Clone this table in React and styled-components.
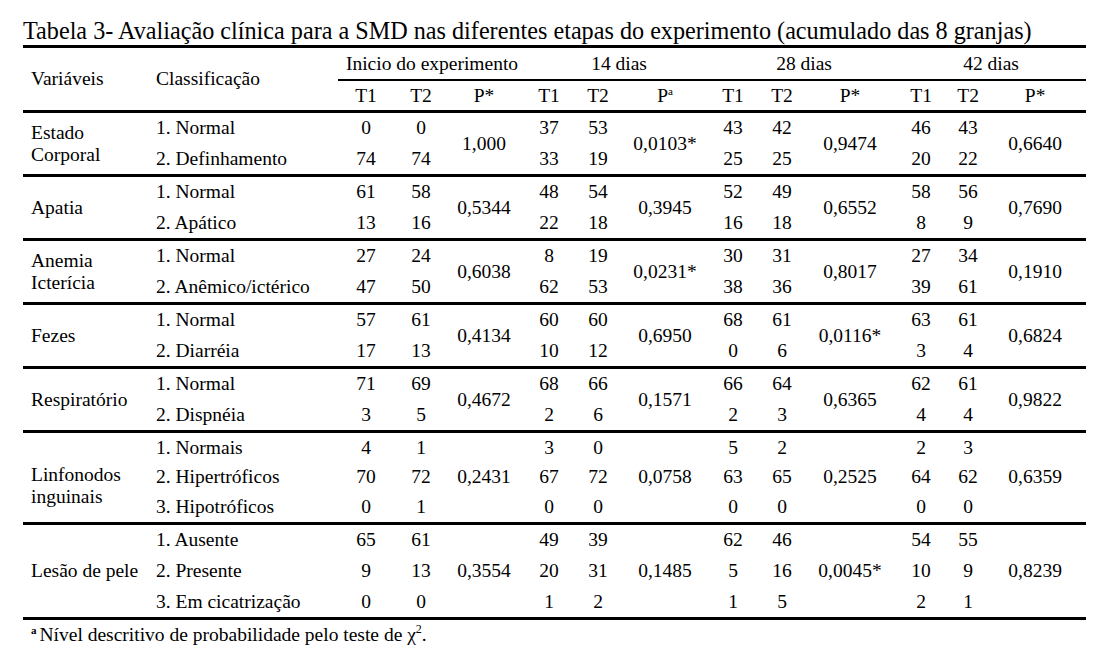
import React from 'react';
import styled, { createGlobalStyle, css } from 'styled-components';

const serif = `"Liberation Serif", "Tinos", "Times New Roman", "DejaVu Serif", serif`;

const GlobalStyle = createGlobalStyle`
    html, body {
        margin: 0;
        padding: 0;
        background: #fff;
    }
    body {
        font-family: ${serif};
        color: #000;
    }
`;

const widths = [125, 190, 56, 54, 72, 58, 40, 94, 42, 56, 80, 62, 32, 102];

const groups = ['Inicio do experimento', '14 dias', '28 dias', '42 dias'];

const sections = [
    {
        name: ['Estado', 'Corporal'],
        rowH: 30.5,
        rows: [
            ['1. Normal', [0, 0], [37, 53], [43, 42], [46, 43]],
            ['2. Definhamento', [74, 74], [33, 19], [25, 25], [20, 22]],
        ],
        p: ['1,000', '0,0103*', '0,9474', '0,6640'],
    },
    {
        name: ['Apatia'],
        rowH: 30.5,
        rows: [
            ['1. Normal', [61, 58], [48, 54], [52, 49], [58, 56]],
            ['2. Apático', [13, 16], [22, 18], [16, 18], [8, 9]],
        ],
        p: ['0,5344', '0,3945', '0,6552', '0,7690'],
    },
    {
        name: ['Anemia', 'Icterícia'],
        rowH: 30.5,
        rows: [
            ['1. Normal', [27, 24], [8, 19], [30, 31], [27, 34]],
            ['2. Anêmico/ictérico', [47, 50], [62, 53], [38, 36], [39, 61]],
        ],
        p: ['0,6038', '0,0231*', '0,8017', '0,1910'],
    },
    {
        name: ['Fezes'],
        rowH: 30.5,
        rows: [
            ['1. Normal', [57, 61], [60, 60], [68, 61], [63, 61]],
            ['2. Diarréia', [17, 13], [10, 12], [0, 6], [3, 4]],
        ],
        p: ['0,4134', '0,6950', '0,0116*', '0,6824'],
    },
    {
        name: ['Respiratório'],
        rowH: 30.5,
        rows: [
            ['1. Normal', [71, 69], [68, 66], [66, 64], [62, 61]],
            ['2. Dispnéia', [3, 5], [2, 6], [2, 3], [4, 4]],
        ],
        p: ['0,4672', '0,1571', '0,6365', '0,9822'],
    },
    {
        name: ['Linfonodos', 'inguinais'],
        rowH: 29.67,
        lower: true,
        rows: [
            ['1. Normais', [4, 1], [3, 0], [5, 2], [2, 3]],
            ['2. Hipertróficos', [70, 72], [67, 72], [63, 65], [64, 62]],
            ['3. Hipotróficos', [0, 1], [0, 0], [0, 0], [0, 0]],
        ],
        p: ['0,2431', '0,0758', '0,2525', '0,6359'],
    },
    {
        name: ['Lesão de pele'],
        rowH: 30.67,
        rows: [
            ['1. Ausente', [65, 61], [49, 39], [62, 46], [54, 55]],
            ['2. Presente', [9, 13], [20, 31], [5, 16], [10, 9]],
            ['3. Em cicatrização', [0, 0], [1, 2], [1, 5], [2, 1]],
        ],
        p: ['0,3554', '0,1485', '0,0045*', '0,8239'],
    },
];

export default function App() {
    return (
        <Page>
            <GlobalStyle />
            <Title>
                Tabela 3- Avaliação clínica para a SMD nas diferentes etapas do experimento (acumulado das 8 granjas)
            </Title>
            <Table>
                <colgroup>
                    {widths.map((w, i) => (
                        <col key={i} style={{ width: w }} />
                    ))}
                </colgroup>
                <thead>
                    <HeadRow $h={33}>
                        <LabelHead rowSpan={2}>Variáveis</LabelHead>
                        <LabelHead rowSpan={2}>Classificação</LabelHead>
                        {groups.map(g => (
                            <GroupHead key={g} colSpan={3}>
                                {g}
                            </GroupHead>
                        ))}
                    </HeadRow>
                    <HeadRow $h={32}>
                        {groups.map((g, i) => (
                            <React.Fragment key={g}>
                                <SubHead>T1</SubHead>
                                <SubHead>T2</SubHead>
                                <SubHead>
                                    P{i === 1 ? <Sup>a</Sup> : '*'}
                                </SubHead>
                            </React.Fragment>
                        ))}
                    </HeadRow>
                </thead>
                <tbody>
                    {sections.map((s, si) =>
                        s.rows.map((r, ri) => {
                            const first = ri === 0;
                            const ruled = first && si > 0;
                            return (
                                <Row key={`${si}-${ri}`} $ruled={ruled} style={{ height: s.rowH + (ruled ? 3 : 0) }}>
                                    {first && (
                                        <NameCell rowSpan={s.rows.length} $lower={s.lower}>
                                            {s.name.map((n, ni) => (
                                                <React.Fragment key={ni}>
                                                    {ni > 0 && <br />}
                                                    {n}
                                                </React.Fragment>
                                            ))}
                                        </NameCell>
                                    )}
                                    <ClassCell>{r[0]}</ClassCell>
                                    {[1, 2, 3, 4].map(gi => (
                                        <React.Fragment key={gi}>
                                            <NumCell>{r[gi][0]}</NumCell>
                                            <NumCell>{r[gi][1]}</NumCell>
                                            {first && <NumCell rowSpan={s.rows.length}>{s.p[gi - 1]}</NumCell>}
                                        </React.Fragment>
                                    ))}
                                </Row>
                            );
                        })
                    )}
                </tbody>
            </Table>
            <Note>
                <NoteMark>a</NoteMark>Nível descritivo de probabilidade pelo teste de χ<NoteSup>2</NoteSup>.
            </Note>
        </Page>
    );
}

const Page = styled.div`
    width: 1105px;
    height: 662px;
    padding: 17px 0 0 23px;
    box-sizing: border-box;
    overflow: hidden;
    font-family: ${serif};
    color: #000;
`;

const Title = styled.div`
    font-family: ${serif};
    font-size: 24.2px;
    line-height: 28px;
    height: 28px;
    white-space: nowrap;
`;

const Table = styled.table`
    width: 1063px;
    table-layout: fixed;
    border-collapse: separate;
    border-spacing: 0;
    border-top: 3px solid #000;
    border-bottom: 3px solid #000;
    font-family: ${serif};
    font-size: 19.5px;
    line-height: 22px;
    color: #000;
`;

const HeadRow = styled.tr`
    height: ${props => props.$h}px;
`;

const cellBase = css`
    padding: 0;
    vertical-align: middle;
    font-weight: normal;
    white-space: nowrap;
`;

const LabelHead = styled.th`
    ${cellBase};
    text-align: left;
    padding-left: 8px;
    border-bottom: 3px solid #000;
`;

const GroupHead = styled.th`
    ${cellBase};
    text-align: center;
    padding-left: 6px;
    border-bottom: 2px solid #000;
`;

const SubHead = styled.th`
    ${cellBase};
    text-align: center;
    border-bottom: 3px solid #000;
`;

const Sup = styled.sup`
    font-size: 11px;
    line-height: 0;
    vertical-align: 7px;
`;

const Row = styled.tr`
    ${props =>
        props.$ruled &&
        css`
            > td {
                border-top: 3px solid #000;
            }
        `};
`;

const NameCell = styled.td`
    ${cellBase};
    text-align: left;
    padding-left: 8px;
    ${props => props.$lower && 'padding-top: 18px;'};
`;

const ClassCell = styled.td`
    ${cellBase};
    text-align: left;
    padding-left: 8px;
`;

const NumCell = styled.td`
    ${cellBase};
    text-align: center;
`;

const Note = styled.div`
    font-family: ${serif};
    font-size: 19.5px;
    line-height: 22px;
    margin-top: 4px;
    padding-left: 8px;
    white-space: nowrap;
`;

const NoteMark = styled.sup`
    font-size: 11px;
    font-weight: bold;
    line-height: 0;
    vertical-align: 7px;
    margin-right: 3px;
`;

const NoteSup = styled.sup`
    font-size: 12px;
    line-height: 0;
    vertical-align: 8px;
`;
